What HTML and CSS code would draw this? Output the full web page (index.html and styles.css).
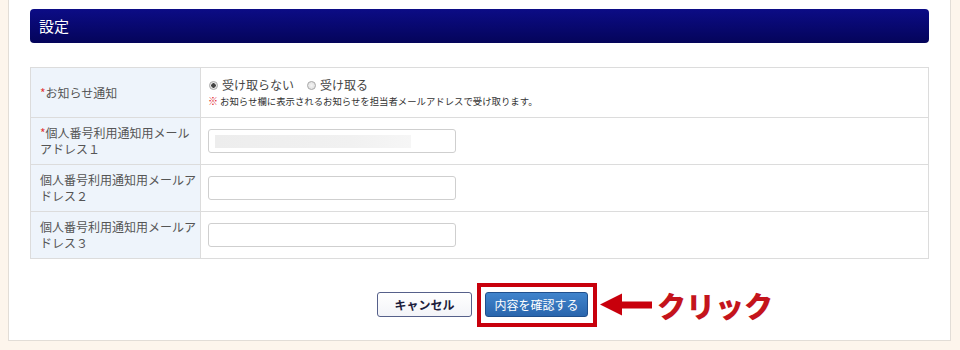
FILE: index.html
```html
<!DOCTYPE html>
<html lang="ja">
<head>
    <meta charset="UTF-8">
    <meta name="viewport" content="width=device-width, initial-scale=1.0">
    <title>設定</title>
    <link rel="stylesheet" href="styles.css">
</head>
<body>
    <div class="panel">
        <h2 class="section-title">設定</h2>

        <table class="settings">
            <tr class="row-notice">
                <th><span class="req">*</span>お知らせ通知</th>
                <td>
                    <div class="radios">
                        <label><input type="radio" name="notice" checked> 受け取らない</label>
                        <label><input type="radio" name="notice"> 受け取る</label>
                    </div>
                    <p class="note"><span class="mark">※</span> お知らせ欄に表示されるお知らせを担当者メールアドレスで受け取ります。</p>
                </td>
            </tr>
            <tr>
                <th><span class="req">*</span>個人番号利用通知用メールアドレス１</th>
                <td><input type="text" class="mail masked"></td>
            </tr>
            <tr>
                <th>個人番号利用通知用メールアドレス２</th>
                <td><input type="text" class="mail"></td>
            </tr>
            <tr>
                <th>個人番号利用通知用メールアドレス３</th>
                <td><input type="text" class="mail"></td>
            </tr>
        </table>

        <div class="actions">
            <button type="button" class="btn-cancel">キャンセル</button>
            <span class="confirm-wrap">
                <button type="submit" class="btn-confirm">内容を確認する</button>
                <span class="callout">
                    <svg width="52" height="24" viewBox="0 0 52 24">
                        <polygon points="0,12 22,1 22,23" fill="#c8000c"/>
                        <rect x="20" y="9" width="32" height="7" fill="#c8000c"/>
                    </svg>
                    <span class="callout-text">クリック</span>
                </span>
            </span>
        </div>
    </div>
</body>
</html>
```

FILE: styles.css
```css
body {
    margin: 0;
    background: #fdf5ec;
    font-family: "Noto Sans CJK JP", "Noto Sans", sans-serif;
    color: #444;
    height: 350px;
    overflow: hidden;
}

.panel {
    margin: 0 9px 0 8px;
    background: white;
    border: 1px solid #e2ddd7;
    border-top: none;
    padding: 9px 21px 23px;
}

.section-title {
    margin: 0;
    height: 34px;
    line-height: 34px;
    padding-left: 9px;
    font-size: 15px;
    font-weight: normal;
    color: white;
    background: linear-gradient(#0c0c86, #04045a);
    border-radius: 4px;
}

.settings {
    width: 100%;
    margin-top: 24px;
    border-collapse: collapse;
    border: 1px solid #dcdcdc;
}

.settings tr {
    height: 47px;
}

.settings .row-notice {
    height: 50px;
}

.settings th,
.settings td {
    border: 1px solid #dcdcdc;
    vertical-align: middle;
}

.settings th {
    width: 156px;
    padding: 0 4px 0 9px;
    background: #eef4fb;
    text-align: left;
    font-size: 12px;
    font-weight: normal;
    line-height: 16px;
    color: #555;
}

.settings td {
    padding: 0 7px;
}

.req {
    color: #e23a3a;
}

.radios {
    display: flex;
    gap: 12px;
    font-size: 12px;
    line-height: 16px;
}

.radios label {
    display: flex;
    align-items: center;
    gap: 4px;
}

.radios input {
    appearance: none;
    margin: 0 0 0 1px;
    width: 9px;
    height: 9px;
    border: 1px solid #aaa;
    border-radius: 50%;
    background: radial-gradient(#f4f4f4, #dcdcdc);
}

.radios input:checked {
    background: radial-gradient(#444 0 2px, #e6e6e6 2.5px);
}

.note {
    margin: 1px 0 0;
    font-size: 9.4px;
    line-height: 14px;
    color: #333;
}

.mark {
    color: #e0202a;
    font-size: 10px;
}

.mail {
    display: block;
    box-sizing: border-box;
    width: 248px;
    height: 24px;
    border: 1px solid #cfcfcf;
    border-radius: 3px;
    background: white;
}

.masked {
    background: linear-gradient(90deg, #ededed, #f1f1f1 70%, #f6f6f6) no-repeat 6px center / 196px 13px, white;
}

.actions {
    display: flex;
    justify-content: center;
    gap: 13px;
    margin-top: 33px;
    padding-left: 6px;
}

.actions button {
    height: 25px;
    border-radius: 3px;
    font-family: inherit;
    font-size: 12px;
    cursor: pointer;
}

.btn-cancel {
    width: 95px;
    background: linear-gradient(#ffffff, #f3f4f8);
    border: 1px solid #56608a;
    color: #1d1d3c;
    font-weight: bold;
}

.confirm-wrap {
    position: relative;
    display: flex;
}

.confirm-wrap::before {
    content: "";
    position: absolute;
    top: -9px;
    bottom: -10px;
    left: -8px;
    right: -9px;
    border: 4px solid #c8000c;
}

.btn-confirm {
    width: 103px;
    background: linear-gradient(#4084cc, #2a66ad);
    border: 1px solid #1f4f8c;
    color: white;
}

.callout {
    position: absolute;
    left: calc(100% + 12px);
    top: 50%;
    transform: translateY(-50%);
    display: flex;
    align-items: center;
    gap: 5px;
    white-space: nowrap;
}

.callout svg {
    display: block;
}

.callout-text {
    font-size: 29px;
    font-weight: 900;
    color: #c4141c;
    line-height: 1;
}
```
